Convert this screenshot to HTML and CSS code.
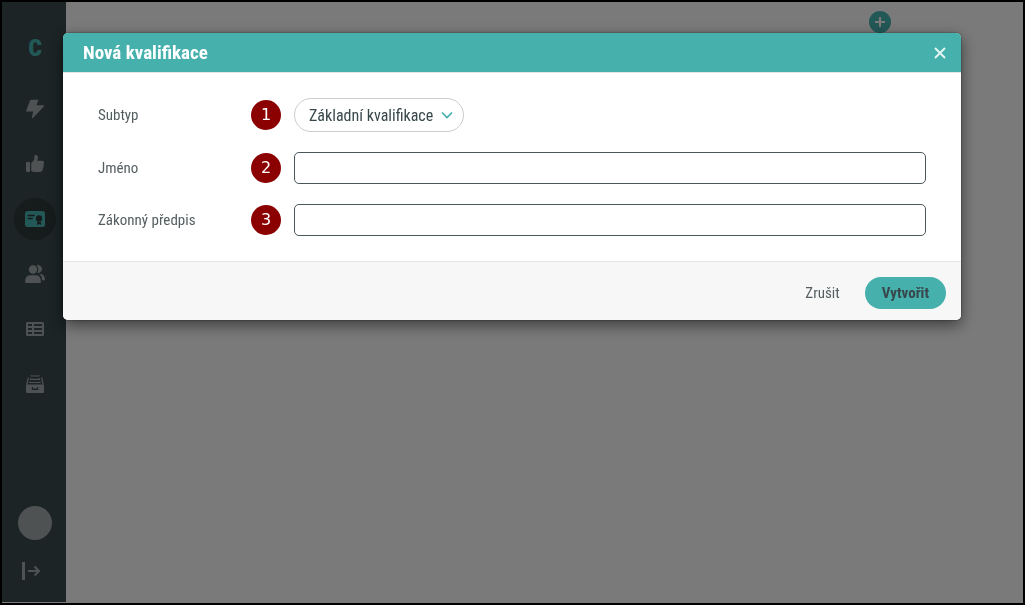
FILE: index.html
```html
<!DOCTYPE html>
<html lang="cs">
<head>
    <meta charset="UTF-8">
    <meta name="viewport" content="width=device-width, initial-scale=1.0">
    <title>Nová kvalifikace</title>
    <link rel="stylesheet" href="styles.css">
</head>
<body>
    <div class="app">
        <aside class="sidebar">
            <a href="#" class="logo">C</a>
            <nav class="nav">
                <a href="#" class="nav-item" aria-label="Aktivita">
                    <svg width="20" height="20" viewBox="0 0 20 20"><path d="M6.2 0.8h7.300l-2 5.500h6.800c.8 0 1 .6.5 1.200L8 19c-.5.6-1.300.2-1.100-.5l1.300-6H2c-.7 0-1-.5-.8-1.100L5 1.600c.2-.5.6-.8 1.200-.8z"/></svg>
                </a>
                <a href="#" class="nav-item" aria-label="Hodnocení">
                    <svg width="20" height="20" viewBox="0 0 20 20"><rect x="1" y="8" width="4" height="10" rx="1"/><path d="M6.200 9.200 9.400 5.500V2.200C9.400 1.300 10 1 10.700 1c1.500 0 2.200 1.200 2.200 2.800 0 1.300-.4 2.100-.7 3h5c1.100 0 1.900.8 1.900 1.800 0 .6-.2 1-.6 1.400.5.8.4 1.800-.2 2.400.3.9 0 1.700-.6 2.200.2 2-1 3.400-3.200 3.400H10c-1.500 0-2.600-.5-3.800-1z"/></svg>
                </a>
                <a href="#" class="nav-item active" aria-label="Kvalifikace">
                    <svg width="20" height="20" viewBox="0 0 20 20"><rect x="0" y="2" width="20" height="16" rx="2.500"/><g class="cut"><rect x="2.500" y="5.800" width="7.500" height="1.400" rx=".7"/><rect x="2.500" y="8.800" width="5.500" height="1.400" rx=".7"/><circle cx="14" cy="9.500" r="3.200"/><path d="M12 13h4v3l-2-1-2 1z"/></g></svg>
                </a>
                <a href="#" class="nav-item" aria-label="Lidé">
                    <svg width="20" height="20" viewBox="0 0 20 20"><circle cx="8" cy="5.500" r="4.200"/><path d="M.2 19v-2.200C.2 13.500 2.200 11.200 5 11.200h6c2.800 0 4.800 2.300 4.800 5.600V19z"/><path d="M11.500 1.300A4 4 0 1 1 13.300 9c-.4 0-.7 0-1-.2A6 6 0 0 0 11.500 1.300zM14.500 10h.8c2.600 0 4.500 2.200 4.500 5v1.200h-2.600c-.1-2.500-1-4.500-2.700-6.200z"/></svg>
                </a>
                <a href="#" class="nav-item" aria-label="Tabulka">
                    <svg width="20" height="20" viewBox="0 0 20 20"><path fill-rule="evenodd" d="M2.500 3h15A1.500 1.500 0 0 1 19 4.500v11a1.500 1.500 0 0 1-1.500 1.500h-15A1.500 1.500 0 0 1 1 15.500v-11A1.500 1.500 0 0 1 2.500 3zM3 5v2h4V5zm6 0v2h8V5zM3 9v2h4V9zm6 0v2h8V9zm-6 4v2h4v-2zm6 0v2h8v-2z"/></svg>
                </a>
                <a href="#" class="nav-item" aria-label="Archiv">
                    <svg width="20" height="20" viewBox="0 0 20 20"><path fill-rule="evenodd" d="M1 10.500h18V18a1 1 0 0 1-1 1H2a1 1 0 0 1-1-1zM6.800 13v3h6.400v-3H12v1.600H8V13z"/><path class="line" d="M1.800 10.500 3.400 3.500M18.200 10.500 16.600 3.500M4.300 8.500h11.400M5 8.500V7.500M15 8.500V7.500M5 5.300h10M5.500 5.300V4.300M14.500 5.300V4.300M6 2h8M6 2.200V1.200M14 2.200V1.200"/></svg>
                </a>
            </nav>
            <div class="avatar"></div>
            <a href="#" class="expand" aria-label="Rozbalit menu">
                <svg width="20" height="20" viewBox="0 0 20 20"><rect x="1" y="1" width="3" height="18"/><path class="arrow" d="M7 10h11M13.500 5.500 18 10l-4.500 4.500"/></svg>
            </a>
        </aside>
        <main class="page">
            <button type="button" class="add-btn" aria-label="Přidat">
                <svg width="12" height="12" viewBox="0 0 12 12"><path d="M6 1v10M1 6h10"/></svg>
            </button>
        </main>
    </div>

    <div class="overlay">
        <form class="modal" role="dialog" aria-labelledby="modal-title">
            <header class="modal-header">
                <h1 id="modal-title">Nová kvalifikace</h1>
                <button type="button" class="close-btn" aria-label="Zavřít">
                    <svg width="12" height="12" viewBox="0 0 12 12"><path d="M1 1l10 10M11 1 1 11"/></svg>
                </button>
            </header>
            <div class="modal-body">
                <div class="row">
                    <label for="subtype">Subtyp</label>
                    <span class="step">1</span>
                    <div class="select-wrap">
                        <select id="subtype">
                            <option>Základní kvalifikace</option>
                        </select>
                        <svg class="chevron" width="12" height="8" viewBox="0 0 12 8"><path d="M1 1.500l5 5 5-5"/></svg>
                    </div>
                </div>
                <div class="row">
                    <label for="name">Jméno</label>
                    <span class="step">2</span>
                    <input type="text" id="name">
                </div>
                <div class="row">
                    <label for="regulation">Zákonný předpis</label>
                    <span class="step">3</span>
                    <input type="text" id="regulation">
                </div>
            </div>
            <footer class="modal-footer">
                <button type="button" class="cancel-btn">Zrušit</button>
                <button type="submit" class="submit-btn">Vytvořit</button>
            </footer>
        </form>
    </div>
</body>
</html>
```
FILE: styles.css
```css
* {
    box-sizing: border-box;
}
body {
    margin: 0;
    font-family: "Roboto Condensed", "Liberation Sans Narrow", Roboto, sans-serif;
    font-size: 15px;
    color: #545e61;
}
button, input, select {
    font-family: inherit;
    font-size: inherit;
    color: inherit;
}
button {
    border: none;
    background: none;
    padding: 0;
    cursor: pointer;
}
svg {
    display: block;
}
.app {
    display: flex;
    min-height: 100vh;
    border: 2px solid #000;
    background-color: #f4f4f4;
}
.sidebar {
    width: 64px;
    margin-bottom: 1px;
    padding: 30px 0 21px 2px;
    background-color: #38484c;
    display: flex;
    flex-direction: column;
    align-items: center;
}
.logo {
    font-size: 24px;
    line-height: 32px;
    font-weight: 900;
    color: #45b0ac;
    text-decoration: none;
}
.nav {
    display: flex;
    flex-direction: column;
    gap: 13px;
    margin-top: 24px;
}
.nav-item {
    width: 42px;
    height: 42px;
    border-radius: 50%;
    display: flex;
    align-items: center;
    justify-content: center;
    fill: #9ea4a5;
}
.nav-item.active {
    background-color: #2c3638;
    fill: #45b0ac;
}
.cut {
    fill: #2c3638;
}
.line, .arrow {
    fill: none;
    stroke: #9ea4a5;
    stroke-width: 2;
}
.line {
    stroke-width: 1.2;
}
.avatar {
    width: 34px;
    height: 34px;
    border-radius: 50%;
    background-color: #9ea4a5;
    margin-top: auto;
}
.expand {
    margin-top: 21px;
    margin-right: 8px;
    fill: #9ea4a5;
}
.page {
    flex: 1;
    padding: 9px 132px;
    display: flex;
    justify-content: flex-end;
    align-items: flex-start;
}
.add-btn {
    width: 22px;
    height: 22px;
    border-radius: 50%;
    background-color: #45b0ac;
    display: flex;
    align-items: center;
    justify-content: center;
}
.add-btn path {
    stroke: #f4f4f4;
    stroke-width: 2;
}

/* modal */
.overlay {
    position: fixed;
    inset: 2px;
    background-color: rgba(0, 0, 0, 0.5);
    padding: 31px 62px 31px 61px;
}
.modal {
    border-radius: 5px;
    background-color: #fff;
    box-shadow: 0 5px 15px rgba(0, 0, 0, 0.5), 0 0 2px rgba(0, 0, 0, 0.6);
    overflow: hidden;
}
.modal-header {
    height: 40px;
    padding: 0 15px 0 20px;
    background-color: #45b0ac;
    border-bottom: 1px solid #e5e5e5;
    display: flex;
    align-items: center;
    justify-content: space-between;
}
.modal-header h1 {
    margin: 0;
    font-size: 19px;
    font-weight: 700;
    color: #fff;
}
.close-btn path {
    stroke: #e3f4f3;
    stroke-width: 2;
}
.modal-body {
    padding: 25px 35px;
    display: flex;
    flex-direction: column;
    gap: 20px;
}
.row {
    display: grid;
    grid-template-columns: 140px 30px 1fr;
    column-gap: 13px;
    align-items: center;
}
.step {
    width: 30px;
    height: 30px;
    border-radius: 50%;
    background-color: #8b0000;
    color: #fff;
    font-family: "DejaVu Sans", Verdana, sans-serif;
    font-size: 16px;
    line-height: 30px;
    text-align: center;
}
.row input {
    width: 100%;
    height: 32px;
    border: 1px solid #4b565a;
    border-radius: 5px;
    padding: 0 10px;
    background-color: #fff;
}
.select-wrap {
    position: relative;
    width: 170px;
}
.select-wrap select {
    display: block;
    appearance: none;
    width: 100%;
    height: 34px;
    border: 1px solid #ccc;
    border-radius: 17px;
    padding: 0 10px 0 14px;
    background-color: #fff;
    color: #38474b;
    font-size: 16px;
}
.chevron {
    position: absolute;
    right: 11px;
    top: 13px;
    pointer-events: none;
}
.chevron path {
    fill: none;
    stroke: #45b0ac;
    stroke-width: 1.7;
}
.modal-footer {
    padding: 15px 15px 11px;
    background-color: #f7f7f7;
    border-top: 1px solid #e5e5e5;
    display: flex;
    justify-content: flex-end;
    align-items: center;
    gap: 25px;
}
.submit-btn {
    height: 32px;
    padding: 0 17px;
    border-radius: 16px;
    background-color: #45b0ac;
    color: #38474b;
    font-weight: 700;
}
```
